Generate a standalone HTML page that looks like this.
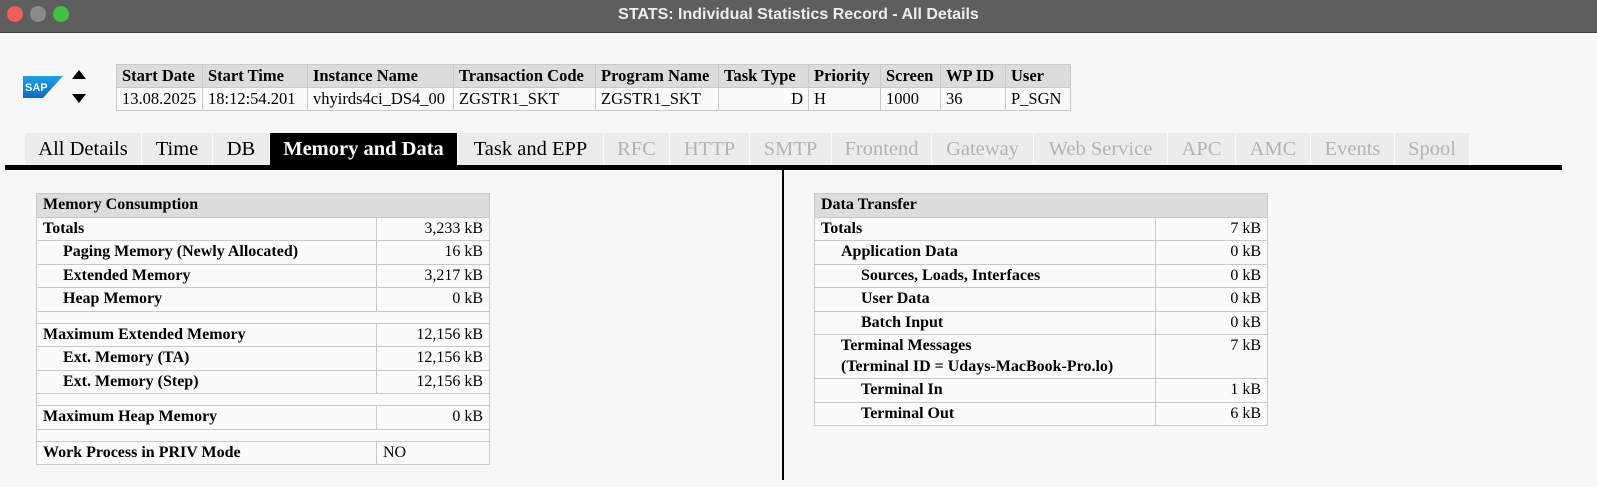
<!DOCTYPE html>
<html><head><meta charset="utf-8"><style>
*{margin:0;padding:0;box-sizing:border-box}
body{width:1597px;height:487px;background:#f7f7f7;font-family:"Liberation Serif",serif;color:#000;position:relative;overflow:hidden}
.tb{position:absolute;left:0;top:0;width:1597px;height:33px;background:#5e5e5e;border-bottom:1px solid #3e3e3e}
.tb .t{position:absolute;left:0;width:100%;top:6px;text-align:center;color:#eee;font:bold 16px "Liberation Sans",sans-serif}
.dot{position:absolute;top:6px;width:16px;height:16px;border-radius:50%}
table{border-collapse:collapse;position:absolute;font-size:16px;table-layout:fixed}
td{border:1px solid #c9c9c9;padding:0 6px;white-space:nowrap;vertical-align:top;line-height:21px;overflow:hidden}
.hd td{background:#dcdcdc;font-weight:bold}
.top td{height:23px;padding:0 5px;font-size:16.5px}
.m td{height:23.5px}
.m td.v{text-align:right}
.m .b{font-weight:bold}
.sp td{height:12px}
.tabs div{position:absolute;top:133px;height:32px;font-size:20.5px;line-height:32px;text-align:center;background:#ececec;color:#b3b3b3;border-right:1px solid #fafafa;white-space:nowrap}
.tabs div.on{color:#000}
.tabs div.sel{background:#000;color:#fff;font-weight:bold}
</style></head><body>
<div class="tb"><div class="dot" style="left:7px;background:#ed5f58"></div><div class="dot" style="left:30px;background:#8a8a8a"></div><div class="dot" style="left:53px;background:#3fc340"></div><div class="t">STATS: Individual Statistics Record - All Details</div></div>

<svg style="position:absolute;left:23px;top:76px" width="40" height="22" viewBox="0 0 40 22"><defs><linearGradient id="g" x1="0" y1="0" x2="0" y2="1"><stop offset="0" stop-color="#1ea2e6"/><stop offset="1" stop-color="#0a6bc2"/></linearGradient></defs><path d="M0 0H40L20 22H0Z" fill="url(#g)"/><text x="2" y="15" font-family="Liberation Sans" font-weight="bold" font-size="11" fill="#fff">SAP</text></svg>
<div style="position:absolute;left:72px;top:70px;width:0;height:0;border-left:7px solid transparent;border-right:7px solid transparent;border-bottom:9px solid #000"></div>
<div style="position:absolute;left:72px;top:94px;width:0;height:0;border-left:7px solid transparent;border-right:7px solid transparent;border-top:9px solid #000"></div>

<table class="top" style="left:116px;top:64px;width:955px">
<colgroup><col style="width:86px"><col style="width:105px"><col style="width:146px"><col style="width:142px"><col style="width:123px"><col style="width:90px"><col style="width:72px"><col style="width:60px"><col style="width:65px"><col></colgroup>
<tr class="hd"><td>Start Date</td><td>Start Time</td><td>Instance Name</td><td>Transaction Code</td><td>Program Name</td><td>Task Type</td><td>Priority</td><td>Screen</td><td>WP ID</td><td>User</td></tr>
<tr style="background:#fbfbfb"><td>13.08.2025</td><td>18:12:54.201</td><td>vhyirds4ci_DS4_00</td><td>ZGSTR1_SKT</td><td>ZGSTR1_SKT</td><td style="text-align:right">D</td><td>H</td><td>1000</td><td>36</td><td>P_SGN</td></tr>
</table>

<div class="tabs">
<div class="on" style="left:25px;width:117px">All Details</div>
<div class="on" style="left:142px;width:71px">Time</div>
<div class="on" style="left:213px;width:57px">DB</div>
<div class="sel" style="left:270px;width:188px">Memory and Data</div>
<div class="on" style="left:458px;width:146px">Task and EPP</div>
<div style="left:604px;width:66px">RFC</div>
<div style="left:670px;width:80px">HTTP</div>
<div style="left:750px;width:82px">SMTP</div>
<div style="left:832px;width:100px">Frontend</div>
<div style="left:932px;width:102px">Gateway</div>
<div style="left:1034px;width:134px">Web Service</div>
<div style="left:1168px;width:68px">APC</div>
<div style="left:1236px;width:75px">AMC</div>
<div style="left:1311px;width:84px">Events</div>
<div style="left:1395px;width:75px">Spool</div>
</div>
<div style="position:absolute;left:5px;top:165px;width:1557px;height:5px;background:#000"></div>
<div style="position:absolute;left:782px;top:170px;width:2px;height:310px;background:#000"></div>

<table class="m" style="left:36px;top:193px;width:454px;background:#fbfbfb">
<colgroup><col style="width:340px"><col></colgroup>
<tr class="hd"><td colspan="2">Memory Consumption</td></tr>
<tr><td class="b">Totals</td><td class="v">3,233 kB</td></tr>
<tr><td class="b" style="padding-left:26px">Paging Memory (Newly Allocated)</td><td class="v">16 kB</td></tr>
<tr><td class="b" style="padding-left:26px">Extended Memory</td><td class="v">3,217 kB</td></tr>
<tr><td class="b" style="padding-left:26px">Heap Memory</td><td class="v">0 kB</td></tr>
<tr class="sp"><td colspan="2"></td></tr>
<tr><td class="b">Maximum Extended Memory</td><td class="v">12,156 kB</td></tr>
<tr><td class="b" style="padding-left:26px">Ext. Memory (TA)</td><td class="v">12,156 kB</td></tr>
<tr><td class="b" style="padding-left:26px">Ext. Memory (Step)</td><td class="v">12,156 kB</td></tr>
<tr class="sp"><td colspan="2"></td></tr>
<tr><td class="b">Maximum Heap Memory</td><td class="v">0 kB</td></tr>
<tr class="sp"><td colspan="2"></td></tr>
<tr><td class="b">Work Process in PRIV Mode</td><td>NO</td></tr>
</table>

<table class="m" style="left:814px;top:193px;width:454px;background:#fbfbfb">
<colgroup><col style="width:341px"><col></colgroup>
<tr class="hd"><td colspan="2">Data Transfer</td></tr>
<tr><td class="b">Totals</td><td class="v">7 kB</td></tr>
<tr><td class="b" style="padding-left:26px">Application Data</td><td class="v">0 kB</td></tr>
<tr><td class="b" style="padding-left:46px">Sources, Loads, Interfaces</td><td class="v">0 kB</td></tr>
<tr><td class="b" style="padding-left:46px">User Data</td><td class="v">0 kB</td></tr>
<tr><td class="b" style="padding-left:46px">Batch Input</td><td class="v">0 kB</td></tr>
<tr><td class="b" style="padding-left:26px;height:44px">Terminal Messages<br>(Terminal ID = Udays-MacBook-Pro.lo)</td><td class="v">7 kB</td></tr>
<tr><td class="b" style="padding-left:46px">Terminal In</td><td class="v">1 kB</td></tr>
<tr><td class="b" style="padding-left:46px">Terminal Out</td><td class="v">6 kB</td></tr>
</table>
</body></html>
